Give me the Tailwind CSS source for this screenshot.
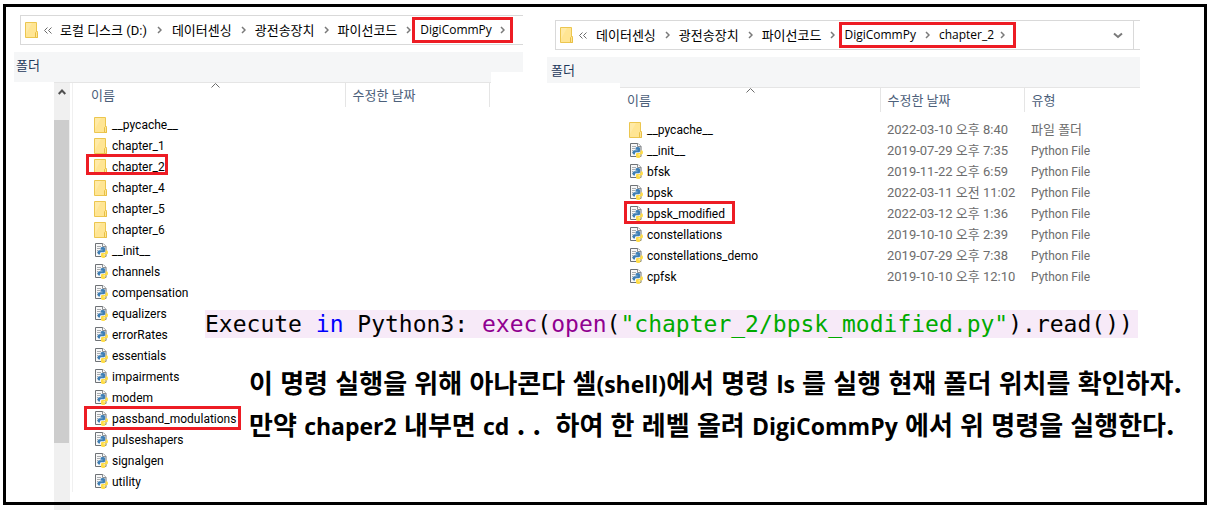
<!DOCTYPE html>
<html lang="ko">
<head>
    <meta charset="UTF-8">
    <meta name="viewport" content="width=device-width, initial-scale=1.0">
    <title>DigiCommPy</title>
    <script src="https://cdn.jsdelivr.net/npm/@tailwindcss/browser@4"></script>
</head>
<body class="bg-white pt-1 pl-[3px] pr-1 pb-[5px] overflow-hidden font-['Roboto','Noto_Sans_CJK_KR',sans-serif] text-[13px] leading-[21px] text-black">
    <!-- Shared icons -->
    <svg class="hidden">
        <defs>
            <symbol id="folder" viewBox="0 0 13 16">
                <path d="M.5.5h11v9h1v6H.5z" fill="#ffe593" stroke="#ecc64f"/>
                <path d="M1 1h6L1 12z" fill="#ffeaa6"/>
                <path d="M10.5 15.5v-5l1-1 1 1v5z" fill="#ffe694" stroke="#e8bf45"/>
            </symbol>
            <symbol id="pyfile" viewBox="0 0 13 15">
                <path d="M.5.5h7.5l3 3v10H.5z" fill="#f8f8f8" stroke="#6e7276"/>
                <path d="M7.5.5v3h3.5" fill="#fff" stroke="#8b8f93"/>
                <path d="M2 3.5h4M2 5.5h3M2 7.5h1M2 9.5h1" stroke="#a9adb1"/>
                <path d="M5.500 5.200Q5.500 4 7.800 4T10 5.200V8Q10 9.200 8.800 9.200H6.200Q5 9.200 5 10.500V11.500H4Q2.500 11.500 2.500 9.500T4 7.300H7.500V6.700H5.500z" fill="#3f7fb5"/>
                <path d="M10.700 7.200h.8Q13 7.200 13 9.300T11.500 11.600H8.500V12.200h2V13.500Q10.500 15 8.200 15T6 13.500V11Q6 9.900 7.200 9.900H9.500Q10.700 9.900 10.700 8.500z" fill="#ffdc45"/>
            </symbol>
            <symbol id="chevron" viewBox="0 0 5 8">
                <path d="M1 1l3 3-3 3" fill="none" stroke="#7a7a7a" stroke-width="1.500"/>
            </symbol>
            <symbol id="overflow" viewBox="0 0 8 7">
                <path d="M3.500.5l-3 3 3 3M7.500.5l-3 3 3 3" fill="none" stroke="#6b6b6b"/>
            </symbol>
            <symbol id="sort" viewBox="0 0 9 5">
                <path d="M.5 4.500l4-4 4 4" fill="none" stroke="#6b6b6b"/>
            </symbol>
        </defs>
    </svg>

    <main class="border-3 border-black grid grid-cols-[199px_342px_1fr] grid-rows-[auto_1fr]">
        <!-- Left window: project folder -->
        <section class="col-start-1 col-span-2 row-start-1 row-span-2 ml-2 mr-6 mt-2 pb-[10px] flex flex-col">
            <nav class="ml-[6px] h-[30px] border-y border-l border-[#d9d9d9] flex items-center pl-1 whitespace-nowrap">
                <svg class="w-[13px] h-4 shrink-0"><use href="#folder"/></svg>
                <svg class="w-2 h-[7px] ml-[6px] mr-2 shrink-0"><use href="#overflow"/></svg>
                <a href="#">로컬 디스크 (D:)</a>
                <svg class="w-[5px] h-2 mx-[10px] shrink-0"><use href="#chevron"/></svg>
                <a href="#">데이터센싱</a>
                <svg class="w-[5px] h-2 mx-[9px] shrink-0"><use href="#chevron"/></svg>
                <a href="#">광전송장치</a>
                <svg class="w-[5px] h-2 mx-[9px] shrink-0"><use href="#chevron"/></svg>
                <a href="#">파이선코드</a>
                <svg class="w-[5px] h-2 mx-[9px] shrink-0"><use href="#chevron"/></svg>
                <span class="relative flex items-center">
                    <a href="#" class="font-['Open_Sans',sans-serif] text-xs leading-5">DigiCommPy</a>
                    <svg class="w-[5px] h-2 ml-2 shrink-0"><use href="#chevron"/></svg>
                    <span class="absolute -inset-y-[3px] -left-2 -right-2 border-3 border-[#ed1c24]"></span>
                </span>
            </nav>
            <div class="mt-[7px] flex">
                <div class="flex-1 h-[30px] bg-[#f5f6f7] pl-[2px] leading-[28px] text-[#1e395b]">폴더</div>
                <div class="w-8 h-5 bg-[#f5f6f7]"></div>
            </div>
            <div class="ml-10 mr-8 flex-1 flex border-t border-[#e5e5e5]">
                <div class="-z-10 -mb-[18px] w-4 shrink-0 bg-[#f0f0f0] flex flex-col">
                    <button type="button" aria-label="위로" class="h-[37px] pt-[6px] flex justify-center items-start">
                        <svg class="w-2 h-[6px]" viewBox="0 0 8 6"><path d="M.7 5l3.300-3.500L7.300 5" fill="none" stroke="#505050" stroke-width="2"/></svg>
                    </button>
                    <div class="h-[323px] mr-px bg-[#cdcdcd]"></div>
                </div>
                <div class="ml-[2px] pr-px flex-1 border-l border-[#f0f0f0]">
                    <table class="w-full table-fixed text-left">
                        <thead class="text-[#4c607a]">
                            <tr class="h-6">
                                <th class="relative w-[272px] pl-[18px] font-normal border-r border-[#e5e5e5]">이름
                                    <svg class="absolute top-0 left-[138px] w-[9px] h-[5px]"><use href="#sort"/></svg>
                                </th>
                                <th class="pl-[7px] font-normal border-r border-[#e5e5e5]">수정한 날짜</th>
                            </tr>
                            <tr class="h-[7px]"></tr>
                        </thead>
                        <tbody class="text-xs">
                            <tr class="h-[21px]"><td class="pl-[21px]"><a href="#" class="flex items-center h-[21px] gap-[5px]"><svg class="w-[13px] h-4"><use href="#folder"/></svg>__pycache__</a></td></tr>
                            <tr class="h-[21px]"><td class="pl-[21px]"><a href="#" class="flex items-center h-[21px] gap-[5px]"><svg class="w-[13px] h-4"><use href="#folder"/></svg>chapter_1</a></td></tr>
                            <tr class="h-[21px]"><td class="pl-[21px]"><a href="#" class="relative inline-flex items-center h-[21px] gap-[5px] align-top"><svg class="w-[13px] h-4"><use href="#folder"/></svg>chapter_2<span class="absolute -top-[2px] bottom-[2px] -left-2 -right-[3px] border-3 border-[#ed1c24]"></span></a></td></tr>
                            <tr class="h-[21px]"><td class="pl-[21px]"><a href="#" class="flex items-center h-[21px] gap-[5px]"><svg class="w-[13px] h-4"><use href="#folder"/></svg>chapter_4</a></td></tr>
                            <tr class="h-[21px]"><td class="pl-[21px]"><a href="#" class="flex items-center h-[21px] gap-[5px]"><svg class="w-[13px] h-4"><use href="#folder"/></svg>chapter_5</a></td></tr>
                            <tr class="h-[21px]"><td class="pl-[21px]"><a href="#" class="flex items-center h-[21px] gap-[5px]"><svg class="w-[13px] h-4"><use href="#folder"/></svg>chapter_6</a></td></tr>
                            <tr class="h-[21px]"><td class="pl-[22px]"><a href="#" class="flex items-center h-[21px] gap-1"><svg class="w-[13px] h-[15px]"><use href="#pyfile"/></svg>__init__</a></td></tr>
                            <tr class="h-[21px]"><td class="pl-[22px]"><a href="#" class="flex items-center h-[21px] gap-1"><svg class="w-[13px] h-[15px]"><use href="#pyfile"/></svg>channels</a></td></tr>
                            <tr class="h-[21px]"><td class="pl-[22px]"><a href="#" class="flex items-center h-[21px] gap-1"><svg class="w-[13px] h-[15px]"><use href="#pyfile"/></svg>compensation</a></td></tr>
                            <tr class="h-[21px]"><td class="pl-[22px]"><a href="#" class="flex items-center h-[21px] gap-1"><svg class="w-[13px] h-[15px]"><use href="#pyfile"/></svg>equalizers</a></td></tr>
                            <tr class="h-[21px]"><td class="pl-[22px]"><a href="#" class="flex items-center h-[21px] gap-1"><svg class="w-[13px] h-[15px]"><use href="#pyfile"/></svg>errorRates</a></td></tr>
                            <tr class="h-[21px]"><td class="pl-[22px]"><a href="#" class="flex items-center h-[21px] gap-1"><svg class="w-[13px] h-[15px]"><use href="#pyfile"/></svg>essentials</a></td></tr>
                            <tr class="h-[21px]"><td class="pl-[22px]"><a href="#" class="flex items-center h-[21px] gap-1"><svg class="w-[13px] h-[15px]"><use href="#pyfile"/></svg>impairments</a></td></tr>
                            <tr class="h-[21px]"><td class="pl-[22px]"><a href="#" class="flex items-center h-[21px] gap-1"><svg class="w-[13px] h-[15px]"><use href="#pyfile"/></svg>modem</a></td></tr>
                            <tr class="h-[21px]"><td class="pl-[22px]"><a href="#" class="relative inline-flex items-center h-[21px] gap-1 align-top"><svg class="w-[13px] h-[15px]"><use href="#pyfile"/></svg>passband_modulations<span class="absolute -top-[2px] -bottom-[1px] -left-[11px] -right-[5px] border-3 border-[#ed1c24]"></span></a></td></tr>
                            <tr class="h-[21px]"><td class="pl-[22px]"><a href="#" class="flex items-center h-[21px] gap-1"><svg class="w-[13px] h-[15px]"><use href="#pyfile"/></svg>pulseshapers</a></td></tr>
                            <tr class="h-[21px]"><td class="pl-[22px]"><a href="#" class="flex items-center h-[21px] gap-1"><svg class="w-[13px] h-[15px]"><use href="#pyfile"/></svg>signalgen</a></td></tr>
                            <tr class="h-[21px]"><td class="pl-[22px]"><a href="#" class="flex items-center h-[21px] gap-1"><svg class="w-[13px] h-[15px]"><use href="#pyfile"/></svg>utility</a></td></tr>
                        </tbody>
                    </table>
                </div>
            </div>
        </section>

        <!-- Right window: chapter_2 -->
        <section class="col-start-3 row-start-1 mr-16 mt-[13px] pb-[23px]">
            <nav class="ml-2 h-[30px] border-y border-l border-[#d9d9d9] flex items-center pl-1 whitespace-nowrap">
                <svg class="w-[13px] h-4 shrink-0"><use href="#folder"/></svg>
                <svg class="w-2 h-[7px] ml-[6px] mr-[9px] shrink-0"><use href="#overflow"/></svg>
                <a href="#">데이터센싱</a>
                <svg class="w-[5px] h-2 mx-[9px] shrink-0"><use href="#chevron"/></svg>
                <a href="#">광전송장치</a>
                <svg class="w-[5px] h-2 mx-[9px] shrink-0"><use href="#chevron"/></svg>
                <a href="#">파이선코드</a>
                <svg class="w-[5px] h-2 mx-[9px] shrink-0"><use href="#chevron"/></svg>
                <span class="relative flex items-center">
                    <a href="#" class="font-['Open_Sans',sans-serif] text-xs leading-5">DigiCommPy</a>
                    <svg class="w-[5px] h-2 mx-[9px] shrink-0"><use href="#chevron"/></svg>
                    <a href="#" class="font-['Open_Sans',sans-serif] text-xs leading-5">chapter_2</a>
                    <svg class="w-[5px] h-2 ml-[6px] shrink-0"><use href="#chevron"/></svg>
                    <span class="absolute -inset-y-[3px] -left-[5px] -right-[11px] border-3 border-[#ed1c24]"></span>
                </span>
                <button type="button" aria-label="이전 위치" class="ml-auto mr-[6px] h-full w-[31px] pl-[10px] border-r border-[#d9d9d9]">
                    <svg class="w-[10px] h-[7px]" viewBox="0 0 10 7"><path d="M1 1.500l4 3.500 4-3.500" fill="none" stroke="#7a7a7a" stroke-width="2"/></svg>
                </button>
            </nav>
            <div class="mt-[7px] flex">
                <div class="w-[73px] h-[26px] bg-[#f5f6f7] pl-1 leading-[28px] text-[#1e395b]">폴더</div>
                <div class="flex-1 h-[30px] bg-[#f5f6f7]"></div>
            </div>
            <div class="ml-[73px] border-t border-[#e5e5e5]">
                <table class="w-full table-fixed text-left text-[#6d6d6d] whitespace-nowrap">
                    <thead class="text-[#4c607a]">
                        <tr class="h-6">
                            <th class="relative w-[260px] pl-[7px] font-normal border-r border-[#e5e5e5]">이름
                                <svg class="absolute top-0 left-[126px] w-[9px] h-[5px]"><use href="#sort"/></svg>
                            </th>
                            <th class="w-36 pl-[7px] font-normal border-r border-[#e5e5e5]">수정한 날짜</th>
                            <th class="pl-[7px] font-normal">유형</th>
                        </tr>
                        <tr class="h-[7px]"></tr>
                    </thead>
                    <tbody>
                        <tr class="h-[21px]"><td class="pl-[9px] text-xs text-black"><a href="#" class="flex items-center h-[21px] gap-[5px]"><svg class="w-[13px] h-4"><use href="#folder"/></svg>__pycache__</a></td><td class="pl-[7px]">2022-03-10 오후 8:40</td><td class="pl-[7px]">파일 폴더</td></tr>
                        <tr class="h-[21px]"><td class="pl-[10px] text-xs text-black"><a href="#" class="flex items-center h-[21px] gap-1"><svg class="w-[13px] h-[15px]"><use href="#pyfile"/></svg>__init__</a></td><td class="pl-[7px]">2019-07-29 오후 7:35</td><td class="pl-[7px] text-xs">Python File</td></tr>
                        <tr class="h-[21px]"><td class="pl-[10px] text-xs text-black"><a href="#" class="flex items-center h-[21px] gap-1"><svg class="w-[13px] h-[15px]"><use href="#pyfile"/></svg>bfsk</a></td><td class="pl-[7px]">2019-11-22 오후 6:59</td><td class="pl-[7px] text-xs">Python File</td></tr>
                        <tr class="h-[21px]"><td class="pl-[10px] text-xs text-black"><a href="#" class="flex items-center h-[21px] gap-1"><svg class="w-[13px] h-[15px]"><use href="#pyfile"/></svg>bpsk</a></td><td class="pl-[7px]">2022-03-11 오전 11:02</td><td class="pl-[7px] text-xs">Python File</td></tr>
                        <tr class="h-[21px]"><td class="pl-[10px] text-xs text-black"><a href="#" class="relative inline-flex items-center h-[21px] gap-1 align-top"><svg class="w-[13px] h-[15px]"><use href="#pyfile"/></svg>bpsk_modified<span class="absolute -top-[2px] bottom-0 -left-[6px] -right-[10px] border-3 border-[#ed1c24]"></span></a></td><td class="pl-[7px]">2022-03-12 오후 1:36</td><td class="pl-[7px] text-xs">Python File</td></tr>
                        <tr class="h-[21px]"><td class="pl-[10px] text-xs text-black"><a href="#" class="flex items-center h-[21px] gap-1"><svg class="w-[13px] h-[15px]"><use href="#pyfile"/></svg>constellations</a></td><td class="pl-[7px]">2019-10-10 오후 2:39</td><td class="pl-[7px] text-xs">Python File</td></tr>
                        <tr class="h-[21px]"><td class="pl-[10px] text-xs text-black"><a href="#" class="flex items-center h-[21px] gap-1"><svg class="w-[13px] h-[15px]"><use href="#pyfile"/></svg>constellations_demo</a></td><td class="pl-[7px]">2019-07-29 오후 7:38</td><td class="pl-[7px] text-xs">Python File</td></tr>
                        <tr class="h-[21px]"><td class="pl-[10px] text-xs text-black"><a href="#" class="flex items-center h-[21px] gap-1"><svg class="w-[13px] h-[15px]"><use href="#pyfile"/></svg>cpfsk</a></td><td class="pl-[7px]">2019-10-10 오후 12:10</td><td class="pl-[7px] text-xs">Python File</td></tr>
                    </tbody>
                </table>
            </div>
        </section>

        <!-- Command and instructions -->
        <section class="col-start-2 col-span-2 row-start-2">
            <code class="block mr-[66px] h-7 bg-[#f7eaf8] font-['DejaVu_Sans_Mono',monospace] text-[23px] leading-7 whitespace-pre">Execute <span class="text-[#0000ff]">in</span> Python3: <span class="text-[#900090]">exec</span>(<span class="text-[#900090]">open</span>(<span class="text-[#00aa00]">"chapter_2/bpsk_modified.py"</span>).read())</code>
            <div class="mt-[23px] ml-11 font-['Noto_Sans_CJK_KR',sans-serif] font-bold text-[26px] leading-[42px]">
                <p class="h-[42px] whitespace-pre">이 명령 실행을 위해 아나콘다 셀<span class="font-['Open_Sans',sans-serif] text-[23px]">(shell)</span>에서 명령 <span class="font-['Open_Sans',sans-serif] text-[23px]">ls</span> 를 실행 현재 폴더 위치를 확인하자.</p>
                <p class="h-[42px] whitespace-pre">만약 <span class="font-['Open_Sans',sans-serif] text-[23px]">chaper2</span> 내부면 <span class="font-['Open_Sans',sans-serif] text-[23px]">cd</span> . .  하여 한 레벨 올려 <span class="font-['Open_Sans',sans-serif] text-[23px]">DigiCommPy</span> 에서 위 명령을 실행한다.</p>
            </div>
        </section>
    </main>
</body>
</html>
